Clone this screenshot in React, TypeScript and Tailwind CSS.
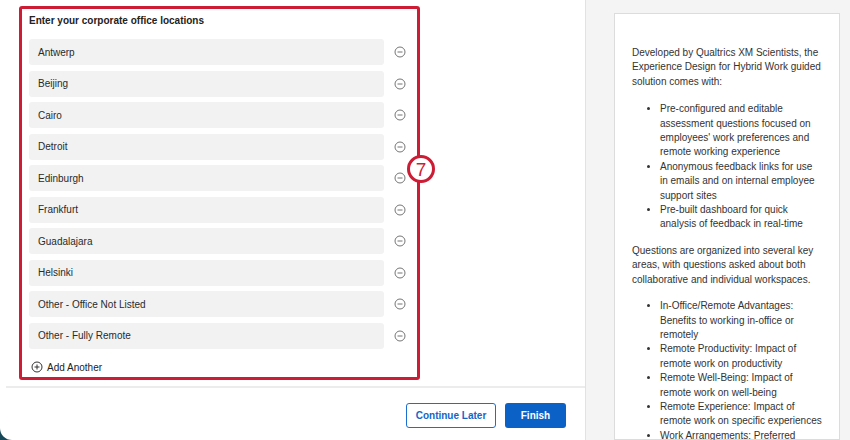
const offices = [
  "Antwerp",
  "Beijing",
  "Cairo",
  "Detroit",
  "Edinburgh",
  "Frankfurt",
  "Guadalajara",
  "Helsinki",
  "Other - Office Not Listed",
  "Other - Fully Remote",
];

const MinusCircle = () => (
  <svg width="12" height="12" viewBox="0 0 12 12" fill="none" stroke="#757575" strokeWidth="1">
    <circle cx="6" cy="6" r="5" />
    <line x1="3.5" y1="6" x2="8.5" y2="6" />
  </svg>
);

const PlusCircle = () => (
  <svg width="12" height="12" viewBox="0 0 12 12" fill="none" stroke="#333" strokeWidth="1">
    <circle cx="6" cy="6" r="5" />
    <line x1="3.5" y1="6" x2="8.5" y2="6" />
    <line x1="6" y1="3.5" x2="6" y2="8.5" />
  </svg>
);

export default function App() {
  return (
    <div className="w-[850px] h-[440px] bg-[#17485a] overflow-hidden" style={{ fontFamily: '"Liberation Sans", Arial, sans-serif' }}>
      <div className="flex h-full w-full bg-white rounded-bl-[12px] overflow-hidden">
        {/* left: form */}
        <div className="relative w-[586px] shrink-0 border-r border-[#e2e2e2] pl-[6px] flex flex-col">
          <div className="pl-[23px] pt-[14px] pb-[12px] border-b-2 border-[#ececec]">
            <div className="text-[10px] leading-[14px] font-bold text-[#222]">Enter your corporate office locations</div>
            <div className="mt-[11px] flex flex-col gap-[5.5px]">
              {offices.map((o) => (
                <div key={o} className="flex items-center">
                  <div className="w-[355px] h-[26px] rounded-[3px] bg-[#f2f2f2] pl-[9px] flex items-center text-[10px] text-[#2a2a2a]">{o}</div>
                  <div className="ml-[10px] flex items-center"><MinusCircle /></div>
                </div>
              ))}
            </div>
            <div className="mt-[11.5px] h-[14px] flex items-center gap-[4px] pl-[2px] text-[10px] text-[#222]">
              <PlusCircle />
              <span>Add Another</span>
            </div>
          </div>
          <div className="flex justify-end gap-[9px] pt-[15px] pr-[19px]">
            <button className="w-[90px] h-[25px] rounded-[3px] border border-[#1a6fd0] bg-white text-[10px] font-semibold text-[#1565c8]">Continue Later</button>
            <button className="w-[61px] h-[25px] rounded-[3px] bg-[#0b61c6] text-[10px] font-semibold text-white">Finish</button>
          </div>

          {/* annotation overlay */}
          <div className="absolute left-[19px] top-[6px] w-[401px] h-[374px] border-[3px] border-[#cc1d35] rounded-[3px] pointer-events-none" />
          <div className="absolute left-[407px] top-[155px] w-[28px] h-[28px] rounded-full border-[3px] border-[#cc1d35] bg-white flex items-center justify-center text-[19px] leading-none font-medium text-[#cc1d35]">7</div>
        </div>

        {/* right: description */}
        <div className="flex-1 bg-[#f4f4f4] pl-[28px] pt-[13px]">
          <div className="w-[226px] h-full bg-white border border-[#dcdcdc] pl-[17px] pr-[16.5px] pt-[32px] text-[10px] leading-[14.4px] text-[#333]">
            <p>Developed by Qualtrics XM Scientists, the Experience Design for Hybrid Work guided solution comes with:</p>
            <ul className="list-disc pl-[28px] mt-[13px]">
              <li>Pre-configured and editable assessment questions focused on employees' work preferences and remote working experience</li>
              <li>Anonymous feedback links for use in emails and on internal employee support sites</li>
              <li>Pre-built dashboard for quick analysis of feedback in real-time</li>
            </ul>
            <p className="mt-[12px]">Questions are organized into several key areas, with questions asked about both collaborative and individual workspaces.</p>
            <ul className="list-disc pl-[28px] mt-[12px]">
              <li>In-Office/Remote Advantages: Benefits to working in-office or remotely</li>
              <li>Remote Productivity: Impact of remote work on productivity</li>
              <li>Remote Well-Being: Impact of remote work on well-being</li>
              <li>Remote Experience: Impact of remote work on specific experiences</li>
              <li>Work Arrangements: Preferred<br />work arrangements</li>
            </ul>
          </div>
        </div>
      </div>
    </div>
  );
}
